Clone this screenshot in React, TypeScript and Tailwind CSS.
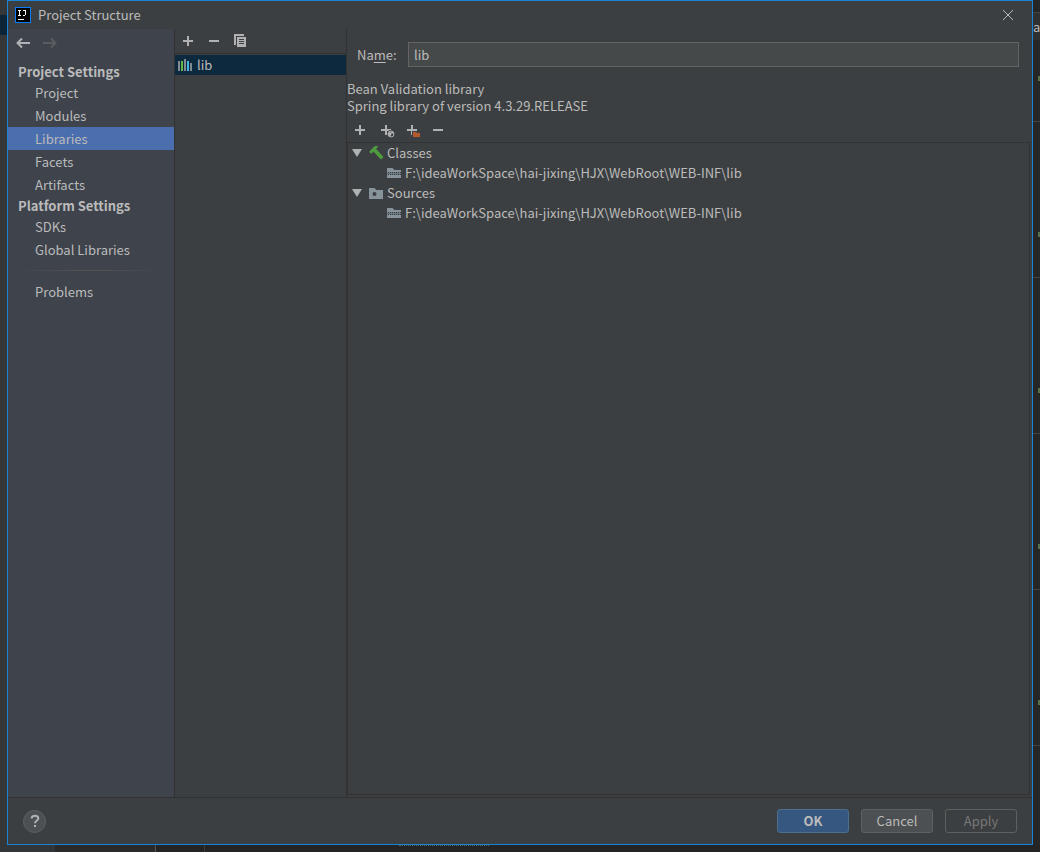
import type { ReactNode } from "react";

const projectItems = ["Project", "Modules", "Libraries", "Facets", "Artifacts"];
const platformItems = ["SDKs", "Global Libraries"];
const libPath = "F:\\ideaWorkSpace\\hai-jixing\\HJX\\WebRoot\\WEB-INF\\lib";

const Logo = () => (
  <svg width="16" height="16" viewBox="0 0 16 16" shapeRendering="crispEdges">
    <rect width="16" height="16" fill="#087cfa" />
    <rect x="1" y="1" width="14" height="14" fill="#000" />
    <path
      d="M3 3h3v1h-1v4h1v1h-3v-1h1v-4h-1zM8 3h3v5h-1v1h-2v-1h2v-4h-2z"
      fill="#fff"
    />
    <rect x="3" y="12" width="6" height="1" fill="#fff" />
  </svg>
);

const Plus = ({ children }: { children?: ReactNode }) => (
  <svg width="18" height="16" viewBox="0 0 18 16">
    <path d="M8 3h2v4h4v2h-4v4h-2v-4h-4v-2h4z" fill="#afb1b3" />
    {children}
  </svg>
);

const Minus = () => (
  <svg width="18" height="16" viewBox="0 0 18 16">
    <path d="M4 7h10v2h-10z" fill="#afb1b3" />
  </svg>
);

const Globe = () => (
  <>
    <circle cx="14" cy="12" r="4" fill="#3c3f41" />
    <circle cx="14" cy="12" r="3" fill="none" stroke="#afb1b3" />
    <path d="M11 11l2-1 2 1-1 2-1 2-2-3zM15 9l2 2-1 1-2-2z" fill="#afb1b3" />
  </>
);

const Copy = () => (
  <svg width="18" height="16" viewBox="0 0 18 16">
    <path d="M3 1h10v2h-8v9h-2z" fill="#afb1b3" />
    <path
      fillRule="evenodd"
      d="M6 4h9v10h-9zM8 6v1h5v-1zM8 8v1h5v-1zM8 10v1h5v-1z"
      fill="#afb1b3"
    />
  </svg>
);

const Arrow = ({ className }: { className: string }) => (
  <svg
    width="14"
    height="12"
    viewBox="0 0 14 12"
    className={className}
    fill="none"
    stroke="currentColor"
    strokeWidth="2"
  >
    <path d="M1 6h13M6 1.5L1.5 6 6 10.5" />
  </svg>
);

const Books = () => (
  <svg width="16" height="14" viewBox="0 0 16 14" shapeRendering="crispEdges">
    <path d="M1 3h2v10h-2zM7 1h2v12h-2zM13 5h2v8h-2z" fill="#7f8b91" />
    <path d="M4 3h2v10h-2z" fill="#62b543" />
    <path d="M10 3h2v10h-2z" fill="#40b6e0" />
  </svg>
);

const Hammer = () => (
  <svg width="16" height="16" viewBox="0 0 16 16">
    <path
      d="M1 7L6.5 1.3Q7 1 7.6 1h2.6L8.2 4 15.5 12 13 14.5 5.4 6.6 3.4 8.8z"
      fill="#4f9c3f"
    />
  </svg>
);

const SourceFolder = () => (
  <svg width="16" height="16" viewBox="0 0 16 16">
    <path
      fillRule="evenodd"
      d="M1 3h5.5l2 2h6.500v9h-14zM4.500 9a2 2 0 1 0 4 0a2 2 0 1 0-4 0"
      fill="#87939a"
    />
  </svg>
);

const ArchiveFolder = () => (
  <svg width="16" height="16" viewBox="0 0 16 16">
    <path d="M1 3h5.500l2 2h6.500v2h-14zM1 10h14v3h-14z" fill="#87939a" />
    <path
      d="M1 7h1v1h1v-1h1v1h1v-1h1v1h1v-1h1v1h1v-1h1v1h1v-1h1v1h1v-1h1v1h1v1h-1v1h-1v-1h-1v1h-1v-1h-1v1h-1v-1h-1v1h-1v-1h-1v1h-1v-1h-1v1h-1v-1h-1v1h-1z"
      fill="#6e7a80"
    />
  </svg>
);

const Triangle = () => (
  <svg width="10" height="8" viewBox="0 0 10 8">
    <path d="M0 0h10L5 8z" fill="#afb1b3" />
  </svg>
);

const ToolButton = ({
  label,
  children,
}: {
  label: string;
  children: ReactNode;
}) => (
  <button
    type="button"
    aria-label={label}
    className="flex w-[26px] h-6 items-center justify-center"
  >
    {children}
  </button>
);

const NavItem = ({ name }: { name: string }) => (
  <a
    href="#"
    className={
      name === "Libraries"
        ? "block h-[23px] leading-[23px] pl-[27px] bg-[#4b6eaf]"
        : "block h-[23px] leading-[23px] pl-[27px]"
    }
  >
    {name}
  </a>
);

const NavHeading = ({ children }: { children: ReactNode }) => (
  <h2 className="h-[19px] leading-[19px] pl-[10px] font-bold">{children}</h2>
);

const TreeGroup = ({ name, icon }: { name: string; icon: ReactNode }) => (
  <li>
    <div className="flex h-5 items-center pl-1">
      <Triangle />
      <span className="ml-[6px] mr-[3px]">{icon}</span>
      {name}
    </div>
    <div className="flex h-5 items-center gap-[3px] pl-[38px]">
      <ArchiveFolder />
      {libPath}
    </div>
  </li>
);

const Sidebar = () => (
  <nav className="w-[167px] shrink-0 bg-[#3e434c] border-r border-[#323232]">
    <div className="flex h-[33px] gap-[13px] pl-2 pt-2">
      <button type="button" aria-label="Back" className="h-3">
        <Arrow className="text-[#afb1b3]" />
      </button>
      <button type="button" aria-label="Forward" className="h-3" disabled>
        <Arrow className="rotate-180 text-[#5a5d5f]" />
      </button>
    </div>
    <NavHeading>Project Settings</NavHeading>
    {projectItems.map((name) => (
      <NavItem key={name} name={name} />
    ))}
    <NavHeading>Platform Settings</NavHeading>
    {platformItems.map((name) => (
      <NavItem key={name} name={name} />
    ))}
    <div className="h-px mx-2 mt-[9px] mb-[9px] bg-linear-to-r from-transparent via-[#555555] to-transparent" />
    <NavItem name="Problems" />
  </nav>
);

const LibraryList = () => (
  <section className="w-[172px] shrink-0 border-r border-[#323232]">
    <div className="flex h-[25px] border-b border-[#323232]">
      <ToolButton label="Add library">
        <Plus />
      </ToolButton>
      <ToolButton label="Remove library">
        <Minus />
      </ToolButton>
      <ToolButton label="Copy library">
        <Copy />
      </ToolButton>
    </div>
    <ul className="pt-px">
      <li className="flex h-5 items-center gap-1 pl-[2px] bg-[#0d293e]">
        <Books />
        lib
      </li>
    </ul>
  </section>
);

const LibraryDetails = () => (
  <section className="flex min-w-0 flex-1 flex-col pr-[2px] pb-[2px]">
    <div className="flex items-center pt-[13px] pl-[10px] pr-[11px]">
      <label htmlFor="name" className="w-[51px]">
        Na<span className="underline underline-offset-2">m</span>e:
      </label>
      <input
        id="name"
        defaultValue="lib"
        className="h-[25px] min-w-0 flex-1 border border-[#646464] bg-[#45494a] px-[5px] outline-none"
      />
    </div>
    <p className="pt-[13px] leading-[17px]">Bean Validation library</p>
    <p className="leading-[17px]">Spring library of version 4.3.29.RELEASE</p>
    <div className="flex pt-1">
      <ToolButton label="Add">
        <Plus />
      </ToolButton>
      <ToolButton label="Specify documentation URL">
        <Plus>
          <Globe />
        </Plus>
      </ToolButton>
      <ToolButton label="Exclude">
        <Plus>
          <path d="M9 9h4l1 1h3v6h-8z" fill="#3c3f41" />
          <path d="M10 10h3l1 1h3v4h-7z" fill="#b65a2d" />
        </Plus>
      </ToolButton>
      <ToolButton label="Remove">
        <Minus />
      </ToolButton>
    </div>
    <ul className="flex-1 border border-[#323232]">
      <TreeGroup name="Classes" icon={<Hammer />} />
      <TreeGroup name="Sources" icon={<SourceFolder />} />
    </ul>
  </section>
);

const Footer = () => (
  <footer className="flex h-[47px] items-center gap-3 border-t border-[#323232] pl-[15px] pr-[15px]">
    <button
      type="button"
      aria-label="Help"
      className="mr-auto flex size-[23px] items-center justify-center rounded-full border border-[#5e6060] bg-[#4c5052]"
    >
      <svg width="10" height="14" viewBox="0 0 10 14">
        <path
          d="M1.700 4.500C1.700 0.800 8.300 0.800 8.300 4.500C8.300 6.500 5 6.500 5 9.200"
          fill="none"
          stroke="#afb1b3"
          strokeWidth="2"
        />
        <path d="M4 11h2v2h-2z" fill="#afb1b3" />
      </svg>
    </button>
    <button
      type="button"
      className="h-6 w-[72px] rounded-[3px] border border-[#4c708c] bg-[#365880] font-bold"
    >
      OK
    </button>
    <button
      type="button"
      className="h-6 w-[72px] rounded-[3px] border border-[#5e6060] bg-[#4c5052]"
    >
      Cancel
    </button>
    <button
      type="button"
      disabled
      className="h-6 w-[72px] rounded-[3px] border border-[#5e6060] text-[#777777]"
    >
      Apply
    </button>
  </footer>
);

// Slices of the editor that stay visible around the dialog
const EditorRight = () => (
  <div className="flex w-[7px] shrink-0 flex-col overflow-hidden bg-[#262626]">
    <div className="h-[13px] border-b border-[#444444]" />
    <div className="h-[27px] bg-[#2d2f30] leading-[27px]">a</div>
    <div className="h-[82px] border-b border-[#444444] pt-[36px] pl-[5px]">
      <div className="h-[5px] w-[2px] bg-[#557048]" />
    </div>
    {[1, 2, 3, 4].map((row) => (
      <div key={row} className="h-[156px] border-b border-[#444444] pt-[110px] pl-[5px]">
        <div className="h-[5px] w-[2px] bg-[#557048]" />
      </div>
    ))}
  </div>
);

const EditorLeft = () => (
  <div className="w-[7px] shrink-0 bg-[#353637] pt-[15px]">
    <div className="h-5 bg-[#0c2436]" />
  </div>
);

const EditorBottom = () => (
  <div className="flex h-[7px] shrink-0 bg-[#242424]">
    <div className="w-[55px] bg-[#323638]" />
    <div className="w-[101px] border-r border-[#555555] bg-[#2a2a2a]" />
    <div className="w-[49px] border-r border-[#334333]" />
    <div className="ml-[194px] h-[2px] w-[90px] border-t border-dotted border-[#4d7050]" />
  </div>
);

export default function App() {
  return (
    <div className="flex h-screen flex-col bg-[#262626] font-['Noto_Sans_CJK_SC','Noto_Sans',sans-serif] text-[13px] text-[#bbbbbb]">
      <div className="flex min-h-0 flex-1">
        <EditorLeft />
        <main className="flex min-w-0 flex-1 flex-col border border-[#1883d7] bg-[#3c3f41]">
          <header className="flex h-7 items-center pl-[7px] pr-[19px]">
            <Logo />
            <h1 className="ml-[7px]">Project Structure</h1>
            <button type="button" aria-label="Close" className="ml-auto">
              <svg width="10" height="10" viewBox="0 0 10 10">
                <path d="M0 0l10 10M10 0L0 10" stroke="#bbbbbb" />
              </svg>
            </button>
          </header>
          <div className="flex min-h-0 flex-1">
            <Sidebar />
            <LibraryList />
            <LibraryDetails />
          </div>
          <Footer />
        </main>
        <EditorRight />
      </div>
      <EditorBottom />
    </div>
  );
}
